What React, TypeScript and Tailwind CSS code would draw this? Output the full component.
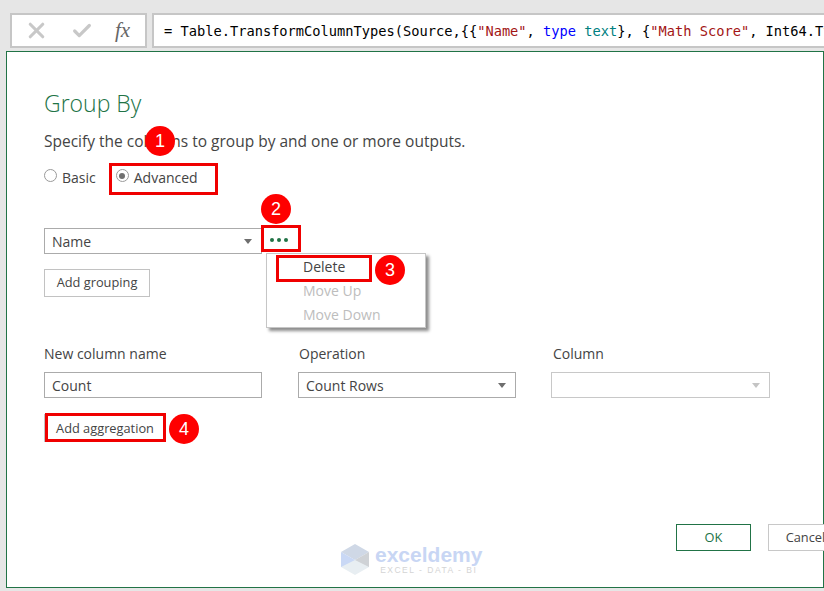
import { Check, X } from "lucide-react"

const uiFont = "font-['Open_Sans','Noto_Sans',sans-serif]"

function Badge({ n, className }: { n: number; className: string }) {
  return (
    <span
      className={`absolute flex h-[30px] w-[30px] items-center justify-center rounded-full bg-[#fe0000] font-['Liberation_Sans',sans-serif] text-[18px] text-white ${className}`}
    >
      {n}
    </span>
  )
}

function RedBox({ className }: { className: string }) {
  return <span className={`pointer-events-none absolute border-[3px] border-[#f00000] ${className}`} />
}

function Caret({ light }: { light?: boolean }) {
  return (
    <span
      className={`h-0 w-0 border-x-[4px] border-t-[5px] border-x-transparent ${light ? "border-t-[#c4c4c4]" : "border-t-[#6e6e6e]"}`}
    />
  )
}

function Select({ value, className, disabled }: { value?: string; className: string; disabled?: boolean }) {
  return (
    <div
      className={`flex h-[26px] items-center justify-between border bg-white pl-[7px] pr-[9px] text-[14px] text-[#444] ${disabled ? "border-[#c8c8c8]" : "border-[#ababab]"} ${className}`}
    >
      <span>{value}</span>
      <Caret light={disabled} />
    </div>
  )
}

function Radio({ checked }: { checked?: boolean }) {
  return (
    <span className="mt-[-3px] flex h-[13px] w-[13px] items-center justify-center rounded-full border border-[#9a9a9a] bg-white">
      {checked && <span className="h-[6px] w-[6px] rounded-full bg-[#707070]" />}
    </span>
  )
}

function FormulaBar() {
  return (
    <div className="flex h-[51px] gap-[5px] pl-[10px] pt-[13px]">
      <div className="flex h-[35px] w-[137px] items-center border-2 border-[#c6c6c6] bg-white">
        <X size={25} strokeWidth={3} className="ml-[12px] text-[#c8c8c8]" />
        <Check size={22} strokeWidth={3.5} className="ml-[22px] text-[#c8c8c8]" />
        <span className="ml-[22px] font-['Liberation_Serif',serif] text-[21px] italic text-[#666]">fx</span>
      </div>
      <div className="flex h-[35px] flex-1 items-center overflow-hidden whitespace-pre border-y-2 border-l-2 border-[#c6c6c6] bg-white pl-[10px] pt-[2px] font-['DejaVu_Sans_Mono',monospace] text-[13.7px] text-black">
        <span>= Table.TransformColumnTypes(Source,{"{{"}</span>
        <span className="text-[#a31515]">"Name"</span>
        <span>, </span>
        <span className="text-[#0000ff]">type</span>
        <span> </span>
        <span className="text-[#008080]">text</span>
        <span>{"}, {"}</span>
        <span className="text-[#a31515]">"Math Score"</span>
        <span>, Int64.Type</span>
      </div>
    </div>
  )
}

function Watermark() {
  return (
    <div className="absolute left-[333px] top-[491px] flex items-center gap-[5px]">
      <svg width="30" height="33" viewBox="0 0 30 33">
        <path d="M15 1 L29 9 L15 17 L1 9Z" fill="#cfd8e6" />
        <path d="M1 9 L15 17 L15 24 L1 24Z" fill="#c9d8f5" />
        <path d="M29 9 L15 17 L15 24 L29 24Z" fill="#cfd2d6" />
        <path d="M1 24 L15 17 L29 24 L15 32Z" fill="#e8eef2" />
      </svg>
      <div className="flex flex-col items-center font-['Liberation_Sans',sans-serif] leading-none">
        <span className="text-[21px] font-bold text-[#c8d6f4]">exceldemy</span>
        <span className="mt-[1px] text-[8.5px] tracking-[1.5px] text-[#d4d4d4]">EXCEL - DATA - BI</span>
      </div>
    </div>
  )
}

export default function App() {
  return (
    <div className={`flex h-[591px] w-[824px] flex-col overflow-hidden bg-[#e6e6e6] ${uiFont}`}>
      <FormulaBar />
      <div className="relative ml-[6px] h-[537px] border border-[#217346] bg-white pl-[37px]">
        <h1 className="pt-[35px] text-[23px] font-light leading-[32px] text-[#217346]">Group By</h1>
        <p className="mt-[12px] text-[15.5px] leading-[20px] text-[#444]">
          Specify the columns to group by and one or more outputs.
        </p>

        <div className="mt-[16px] flex h-[20px] items-center text-[14px] text-[#444]">
          <Radio />
          <span className="ml-[5px]">Basic</span>
          <span className="ml-[20px]">
            <Radio checked />
          </span>
          <span className="ml-[5px]">Advanced</span>
        </div>

        <div className="mt-[41px] flex items-center">
          <Select value="Name" className="w-[218px]" />
          <span className="ml-[8px] mt-[-2px] flex gap-[3px]">
            <span className="h-[4px] w-[4px] rounded-full bg-[#217346]" />
            <span className="h-[4px] w-[4px] rounded-full bg-[#217346]" />
            <span className="h-[4px] w-[4px] rounded-full bg-[#217346]" />
          </span>
        </div>

        <button className="mt-[15px] block h-[28px] w-[106px] border border-[#c2c2c2] bg-white text-[12.8px] text-[#444]">
          Add grouping
        </button>

        <div className="mt-[47px] flex">
          <div className="w-[254px]">
            <label className="block text-[14px] leading-[20px] text-[#444]">New column name</label>
            <div className="mt-[8px] flex h-[26px] w-[218px] items-center border border-[#ababab] bg-white pl-[7px] text-[14px] text-[#444]">
              Count
            </div>
          </div>
          <div className="w-[253px]">
            <label className="block pl-px text-[14px] leading-[20px] text-[#444]">Operation</label>
            <Select value="Count Rows" className="mt-[8px] w-[218px]" />
          </div>
          <div>
            <label className="block pl-[2px] text-[14px] leading-[20px] text-[#444]">Column</label>
            <Select disabled className="mt-[8px] w-[219px]" />
          </div>
        </div>

        <button className="mt-[16px] block h-[28px] w-[122px] border border-[#c2c2c2] bg-white pt-[2px] text-[12.8px] text-[#444]">
          Add aggregation
        </button>

        <div className="mt-[82px] flex gap-[17px] pl-[632px]">
          <button className="h-[27px] w-[75px] shrink-0 border border-[#217346] bg-white text-[12.8px] text-[#217346]">
            OK
          </button>
          <button className="h-[27px] w-[75px] shrink-0 border border-[#c8c8c8] bg-white text-[12.8px] text-[#444]">
            Cancel
          </button>
        </div>

        <div className="absolute left-[259px] top-[201px] w-[160px] border border-[#c6c6c6] bg-white pt-[1px] text-[14px] leading-[24px] shadow-[3px_3px_3px_rgba(0,0,0,0.45)]">
          <div className="pl-[36px] text-[#444]">Delete</div>
          <div className="pl-[36px] text-[#bdbdbd]">Move Up</div>
          <div className="pl-[36px] text-[#bdbdbd]">Move Down</div>
        </div>

        <Watermark />

        <RedBox className="left-[102px] top-[111px] h-[32px] w-[109px]" />
        <RedBox className="left-[254px] top-[173px] h-[27px] w-[40px]" />
        <RedBox className="left-[269px] top-[203px] h-[27px] w-[96px]" />
        <RedBox className="left-[38px] top-[361px] h-[29px] w-[121px]" />

        <Badge n={1} className="left-[138px] top-[74px]" />
        <Badge n={2} className="left-[254px] top-[142px]" />
        <Badge n={3} className="left-[368px] top-[203px]" />
        <Badge n={4} className="left-[162px] top-[362px]" />
      </div>
    </div>
  )
}
